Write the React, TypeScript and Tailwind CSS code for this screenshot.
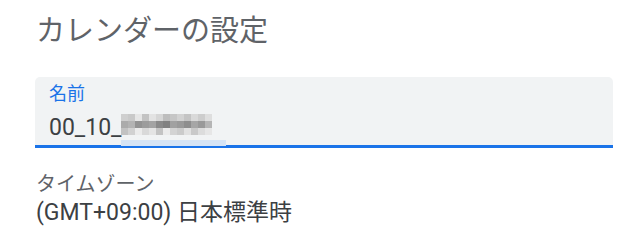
import React from "react";

const font = { fontFamily: 'Roboto, "Noto Sans CJK JP", sans-serif' };

// モザイク部分の色（3行 x 13列）
const mosaic: string[][] = [
  ["bg-[#cfcfcf]", "bg-[#c9c9c9]", "bg-[#e6e6e6]", "bg-[#c3c3c3]", "bg-[#e3e3e3]", "bg-[#d6d6d6]", "bg-[#bdbdbd]", "bg-[#c6c6c6]", "bg-[#d2d2d2]", "bg-[#c4c4c4]", "bg-[#d9d9d9]", "bg-[#cdcdcd]", "bg-[#dedede]"],
  ["bg-[#ababab]", "bg-[#b3b3b3]", "bg-[#939393]", "bg-[#9c9c9c]", "bg-[#a3a3a3]", "bg-[#8a8a8a]", "bg-[#818181]", "bg-[#a1a1a1]", "bg-[#9a9a9a]", "bg-[#8e8e8e]", "bg-[#a6a6a6]", "bg-[#999999]", "bg-[#b5b5b5]"],
  ["bg-[#c2c2c2]", "bg-[#d1d1d1]", "bg-[#ebebeb]", "bg-[#d9d9d9]", "bg-[#e4e4e4]", "bg-[#c3c3c3]", "bg-[#ebebeb]", "bg-[#d3d3d3]", "bg-[#cbcbcb]", "bg-[#e1e1e1]", "bg-[#c9c9c9]", "bg-[#dcdcdc]", "bg-[#e6e6e6]"],
];

function Mosaic() {
  return (
    <span className="flex flex-col">
      {mosaic.map((row, r) => (
        <span key={r} className="flex">
          {row.map((c, i) => (
            <span key={i} className={`block w-[7px] h-[7px] ${c}`} />
          ))}
        </span>
      ))}
    </span>
  );
}

export default function App() {
  return (
    <div className="w-[640px] h-[246px] bg-white overflow-hidden" style={font}>
      <div className="pl-[36px] pt-[17px]">
        <h1 className="text-[29px] leading-[29px] text-[#5f6368] font-normal">カレンダーの設定</h1>
      </div>

      <div className="ml-[35px] mt-[31px] w-[578px] h-[71px] bg-[#f1f3f4] rounded-t-[5px] border-b-[3px] border-[#1a73e8] pl-[14px] pt-[8px]">
        <div className="text-[18px] leading-[18px] text-[#1a73e8]">名前</div>
        <div className="mt-[13px] flex items-end text-[23px] leading-[23px] text-[#3c4043]">
          <span>00_10_</span>
          <span className="relative -top-[4px]">
            <Mosaic />
            <span className="absolute left-0 top-[26px] w-[105px] h-[6px] bg-[#d6e4f5]" />
          </span>
        </div>
      </div>

      <div className="pl-[36px] mt-[26px]">
        <div className="text-[20px] leading-[20px] text-[#5f6368]">タイムゾーン</div>
        <div className="mt-[7px] text-[23px] leading-[23px] text-[#3c4043]">(GMT+09:00) 日本標準時</div>
      </div>
    </div>
  );
}
